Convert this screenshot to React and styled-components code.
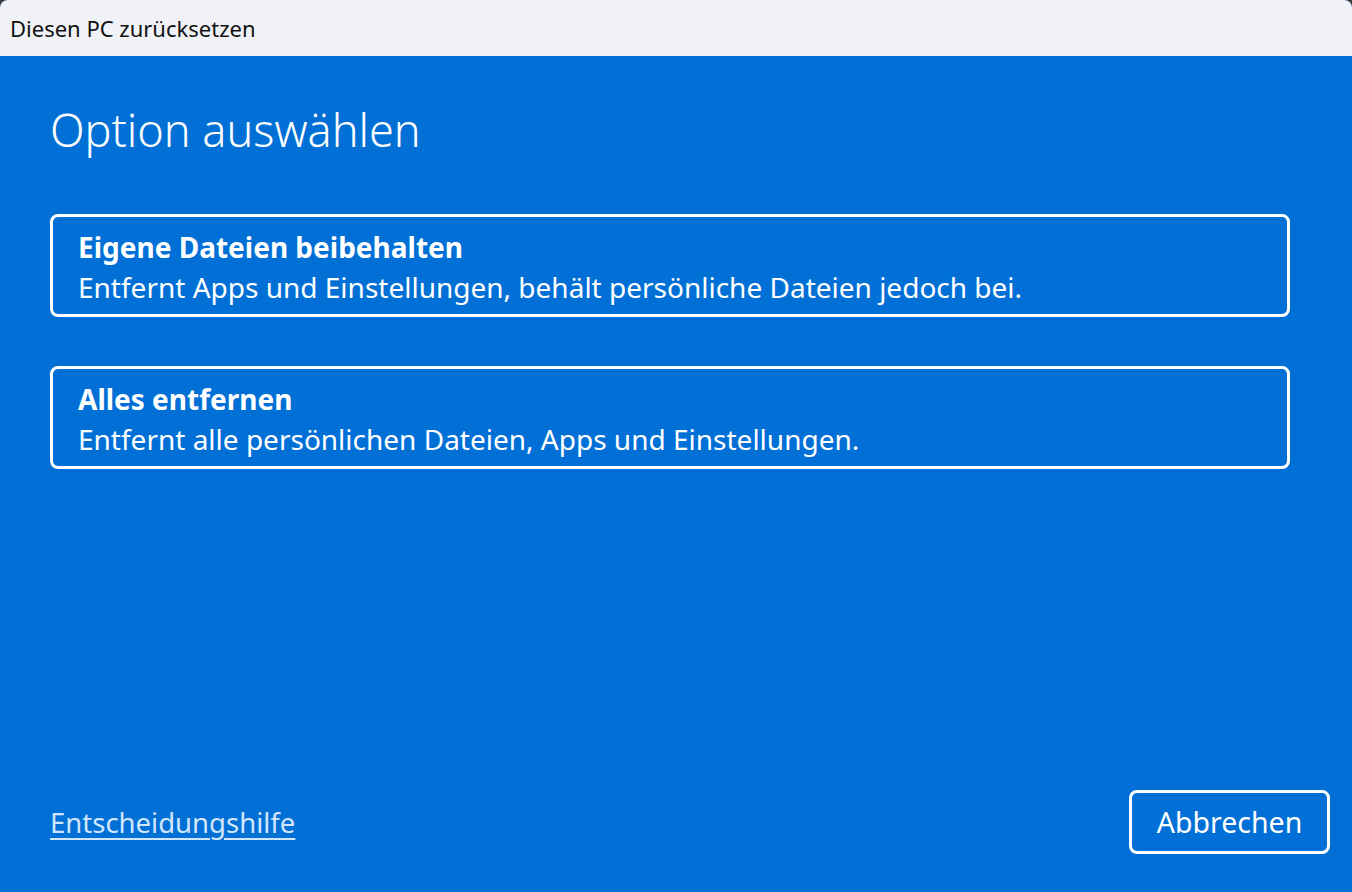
import React from 'react';
import styled, { createGlobalStyle } from 'styled-components';

const GlobalStyle = createGlobalStyle`
  html, body {
    margin: 0;
    padding: 0;
    height: 100%;
  }
  body {
    font-family: "Noto Sans", "Open Sans", sans-serif;
    background: #3a3a3a;
  }
  #root {
    height: 100%;
  }
`;

const Window = styled.div`
  height: 892px;
  display: flex;
  flex-direction: column;
  background: #0070d6;
  border-radius: 8px 8px 0 0;
  overflow: hidden;
`;

const TitleBar = styled.div`
  height: 56px;
  flex-shrink: 0;
  background: #f0f2f7;
  display: flex;
  align-items: center;
  padding-left: 10px;
  box-sizing: border-box;
  font-size: 22px;
  color: #111;
`;

const Body = styled.div`
  flex: 1;
  display: flex;
  flex-direction: column;
  padding: 0 22px 38px 50px;
  color: #fff;
`;

const Heading = styled.h1`
  margin: 0;
  padding-top: 44px;
  font-size: 45px;
  font-weight: 300;
  line-height: 60px;
`;

const Options = styled.div`
  display: flex;
  flex-direction: column;
  gap: 49px;
  margin-top: 54px;
  margin-right: 40px;
`;

const OptionCard = styled.button`
  display: flex;
  flex-direction: column;
  align-items: flex-start;
  text-align: left;
  height: 103px;
  box-sizing: border-box;
  border: 3px solid #fff;
  border-radius: 8px;
  background: transparent;
  color: #fff;
  padding: 10px 0 0 25px;
  font-family: inherit;
  cursor: pointer;
`;

const OptionTitle = styled.span`
  font-size: 28px;
  font-weight: 700;
  line-height: 40px;
`;

const OptionText = styled.span`
  font-size: 28px;
  line-height: 40px;
`;

const Footer = styled.div`
  margin-top: auto;
  display: flex;
  align-items: center;
  justify-content: space-between;
`;

const HelpLink = styled.a`
  color: #d2e6fb;
  font-size: 27.5px;
  text-decoration: underline;
  text-underline-offset: 5px;
  text-decoration-thickness: 2px;
  cursor: pointer;
`;

const CancelButton = styled.button`
  width: 201px;
  height: 64px;
  box-sizing: border-box;
  border: 3px solid #fff;
  border-radius: 8px;
  background: transparent;
  color: #fff;
  font-family: inherit;
  font-size: 28.5px;
  padding: 0;
  cursor: pointer;
`;

const options = [
  {
    title: 'Eigene Dateien beibehalten',
    text: 'Entfernt Apps und Einstellungen, behält persönliche Dateien jedoch bei.',
  },
  {
    title: 'Alles entfernen',
    text: 'Entfernt alle persönlichen Dateien, Apps und Einstellungen.',
  },
];

const App = () => {
  return (
    <>
      <GlobalStyle />
      <Window>
        <TitleBar>Diesen PC zurücksetzen</TitleBar>
        <Body>
          <Heading>Option auswählen</Heading>
          <Options>
            {options.map((o) => (
              <OptionCard key={o.title}>
                <OptionTitle>{o.title}</OptionTitle>
                <OptionText>{o.text}</OptionText>
              </OptionCard>
            ))}
          </Options>
          <Footer>
            <HelpLink>Entscheidungshilfe</HelpLink>
            <CancelButton>Abbrechen</CancelButton>
          </Footer>
        </Body>
      </Window>
    </>
  );
};

export default App;
